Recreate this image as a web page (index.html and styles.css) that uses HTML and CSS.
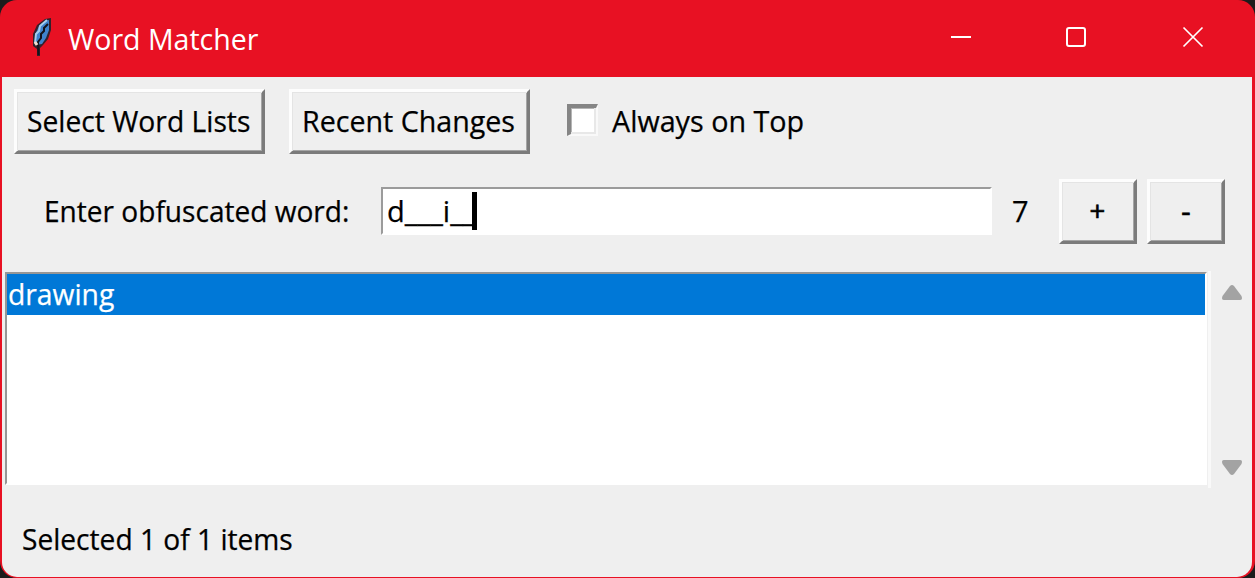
FILE: index.html
```html
<!DOCTYPE html>
<html lang="en">
<head>
<meta charset="utf-8">
<title>Word Matcher</title>
<link rel="stylesheet" href="styles.css">
</head>
<body>
<div class="window">
  <header class="titlebar">
    <svg class="feather" width="24" height="42" viewBox="0 0 24 42">
      <path d="M17 2L23 1L23 13L20 22L15 28L12 31L12 39H9L9 32L5 29L5 17L9 8Z" fill="#35202a"/>
      <path d="M17 4L21 3L21 13L18 21L14 27L8 28L7 18L11 9Z" fill="#3f83cc"/>
      <path d="M19 3L12 9L11 14L8 17L7 26" fill="none" stroke="#a5cfee" stroke-width="2"/>
      <path d="M20 7L16 11L16 14L13 17L13 21L10 25L10.500 38" fill="none" stroke="#14141c" stroke-width="2"/>
      <path d="M7 25L9 28" stroke="#f2dfd0" stroke-width="3"/>
    </svg>
    <h1 class="title">Word Matcher</h1>
    <div class="controls">
      <svg width="22" height="22" viewBox="0 0 22 22"><path d="M1 11H21" stroke="#fff" stroke-width="2"/></svg>
      <svg width="22" height="22" viewBox="0 0 22 22"><rect x="2" y="2" width="18" height="18" rx="2" fill="none" stroke="#fff" stroke-width="2"/></svg>
      <svg width="22" height="22" viewBox="0 0 22 22"><path d="M1.500 1.500L20.500 20.500M20.500 1.500L1.500 20.500" stroke="#fff" stroke-width="1.700"/></svg>
    </div>
  </header>
  <main class="content">
    <div class="toolbar">
      <button class="button select"><span class="text">Select Word Lists</span></button>
      <button class="button recent"><span class="text">Recent Changes</span></button>
      <span class="checkbox"></span>
      <span class="text check-label">Always on Top</span>
    </div>
    <div class="entry-row">
      <span class="text entry-label">Enter obfuscated word:</span>
      <div class="entry"><span class="text entry-text">d___i__</span><span class="caret"></span></div>
      <span class="text count">7</span>
      <button class="button small plus"><span class="text">+</span></button>
      <button class="button small"><span class="text">-</span></button>
    </div>
    <div class="list-row">
      <div class="list"><div class="item"><span class="text">drawing</span></div></div>
      <div class="scrollbar">
        <svg width="22" height="17" viewBox="0 0 22 17"><path d="M9 2Q11 0 13 2L20.500 12Q22 16 19 16H3Q0 16 1.500 12Z" fill="#a3a3a3"/></svg>
        <svg width="22" height="17" viewBox="0 0 22 17"><path d="M9 15Q11 17 13 15L20.500 5Q22 1 19 1H3Q0 1 1.500 5Z" fill="#a3a3a3"/></svg>
      </div>
    </div>
    <div class="status"><span class="text">Selected 1 of 1 items</span></div>
  </main>
</div>
</body>
</html>
```
FILE: styles.css
```css
* { box-sizing: border-box; }
body { margin: 0; background: #1c1c1c; font-family: "Open Sans", "Noto Sans", sans-serif; overflow: hidden; }
.window { width: 1255px; height: 578px; display: flex; flex-direction: column; background: #e81123; border-radius: 17px; padding: 0 3px 1px 2px; overflow: hidden; }
.titlebar { height: 77px; flex: none; display: flex; align-items: flex-start; padding: 17px 38px 0 26px; }
.feather { flex: none; }
.title { margin: 2px 0 0 16px; color: #fff; font-size: 29px; font-weight: 400; line-height: 40px; white-space: nowrap; transform: scaleX(.983); transform-origin: left center; }
.controls { display: flex; gap: 94px; margin: 9px 10px 0 auto; }
.controls svg:nth-child(2) { margin: 0 1px 0 -1px; }
.content { flex: 1; background: #efefef; border-radius: 0 0 15px 15px; display: flex; flex-direction: column; color: #000; min-height: 0; }
.text { display: inline-block; font-size: 29px; line-height: 40px; white-space: nowrap; transform-origin: left center; -webkit-text-stroke: .25px currentColor; }
.toolbar { display: flex; align-items: flex-start; padding: 12px 0 0 12px; height: 102px; flex: none; }
.button { font: inherit; color: inherit; flex: none; height: 65px; padding: 0 0 1px 10px; text-align: left; background: #efefef; border: solid; border-width: 3px; border-color: #fdfdfd #7b7b7b #7b7b7b #fdfdfd; box-shadow: inset 1px 1px #e4e4e4, inset -1px -1px #a5a5a5; }
.select { width: 251px; margin: 0 24px 0 0; }
.recent { width: 241px; margin: 0 37px 0 0; }
.select .text { transform: scaleX(.974); }
.recent .text { transform: scaleX(.987); }
.checkbox { width: 31px; height: 32px; flex: none; margin-top: 15px; background: #fff; border: solid; border-width: 4px 2px 2px 4px; border-color: #858585 #f9f9f9 #f9f9f9 #858585; box-shadow: inset -2px -2px #e8e8e8, inset 1px 1px #b5b5b5; }
.check-label { margin: 12px 0 0 14px; transform: scaleX(.99); }
.entry-row { display: flex; height: 92px; flex: none; padding-left: 42px; }
.entry-label { width: 337px; margin-top: 12px; flex: none; transform: scaleX(.968); }
.entry { width: 611px; height: 48px; flex: none; margin-top: 8px; background: #fff; border: solid; border-width: 2px; border-color: #9b9b9b #fff #fff #9b9b9b; display: flex; padding: 2px 0 0 4px; }
.entry-text { width: 85px; }
.caret { width: 5px; height: 38px; background: #000; margin-top: 1px; }
.count { width: 47px; margin: 12px 0 0 20px; flex: none; }
.small { width: 78px; padding: 0 0 1px; margin: 0; text-align: center; }
.small .text { -webkit-text-stroke-width: .7px; }
.plus { margin-right: 10px; }
.plus .text { transform: translateX(-1px) scale(.95); transform-origin: center; }
.list-row { display: flex; height: 217px; flex: none; padding-left: 3px; }
.list { width: 1203px; height: 213px; margin-top: 1px; background: #fff; border: solid; border-width: 2px; border-color: #969696 #fff #fff #969696; }
.item { height: 41px; width: 1198px; background: #0078d7; color: #fff; padding-left: 1px; }
.item .text { transform: scaleX(.975); }
.scrollbar { width: 44px; border-left: 3px solid #f9f9f9; margin-left: 1px; padding: 13px 0 12px 10px; display: flex; flex-direction: column; justify-content: space-between; }
.status { padding: 31px 0 0 20px; }
.status .text { transform: scaleX(.97); }
```
